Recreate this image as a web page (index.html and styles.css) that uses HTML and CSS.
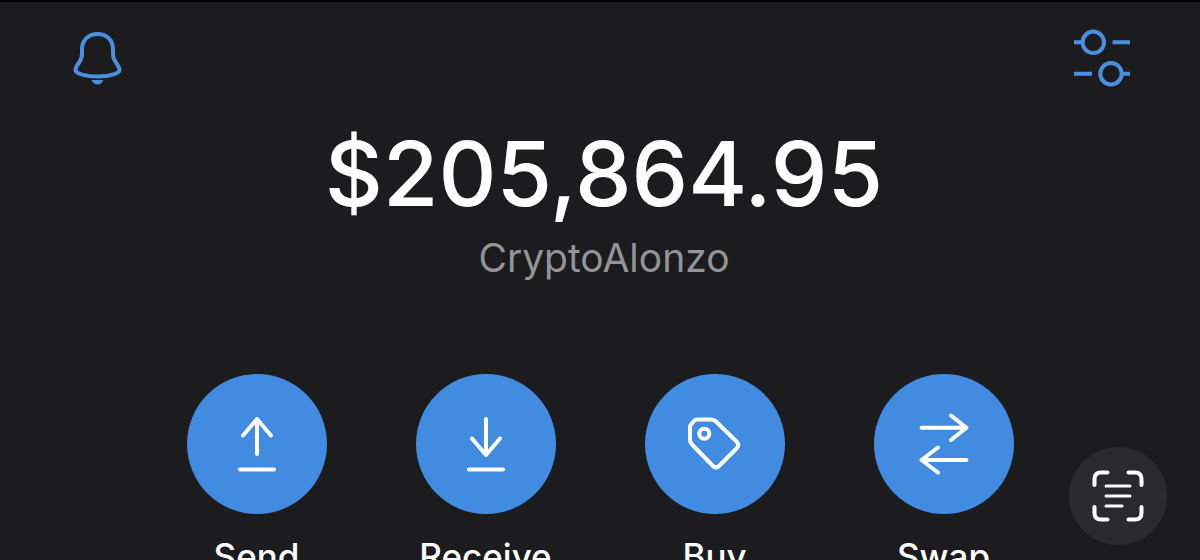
FILE: index.html
```
<!DOCTYPE html>
<html lang="en">
<head>
    <meta charset="UTF-8">
    <meta name="viewport" content="width=device-width, initial-scale=1.0">
    <title>Wallet</title>
    <link rel="stylesheet" href="styles.css">
</head>
<body>
    <header class="top-bar">
        <button type="button" class="icon-button" aria-label="Notifications">
            <svg viewBox="0 0 60 60">
                <path d="M29.5 6C20 6 14 12.500 14 21V26C14 34 7.500 37 7.500 42C7.500 45.500 18 48.500 29.500 48.500S51.500 45.500 51.500 42C51.500 37 45 34 45 26V21C45 12.500 39 6 29.500 6Z"/>
                <path class="filled" d="M23.500 52H35.500C34 55 32 56.500 29.500 56.500S25 55 23.500 52Z"/>
            </svg>
        </button>
        <button type="button" class="icon-button" aria-label="Settings">
            <svg viewBox="0 0 60 60">
                <circle cx="21.300" cy="14.300" r="10.700"/>
                <circle cx="39" cy="45.700" r="10.700"/>
                <path d="M2 14.300H10M40.500 14.300H58M2 45.700H20M50 45.700H58"/>
            </svg>
        </button>
    </header>

    <main>
        <div class="summary">
            <h1 class="balance">$205,864.95</h1>
            <p class="account">CryptoAlonzo</p>
        </div>

        <div class="actions">
            <button type="button" class="action">
                <svg class="circle" viewBox="0 0 140 140">
                    <path d="M70 45V80M56 61.500L70 45L84 61.500M53 95.500H87"/>
                </svg>
                <span>Send</span>
            </button>
            <button type="button" class="action">
                <svg class="circle" viewBox="0 0 140 140">
                    <path d="M70 45V81M56 64.500L70 81L84 64.500M53 95.500H87"/>
                </svg>
                <span>Receive</span>
            </button>
            <button type="button" class="action">
                <svg class="circle" viewBox="0 0 140 140">
                    <path d="M52 45.500H66Q69 45.500 71 47.500L91.500 67.500Q95 71 91.500 74.500L74 92Q71 95 68 92L47 70.500Q45 68.500 45 65.500V53Q45 51.500 46 50.500L49.500 46.500Q50.500 45.500 52 45.500Z"/>
                    <circle cx="59.300" cy="59.700" r="5"/>
                </svg>
                <span>Buy</span>
            </button>
            <button type="button" class="action">
                <svg class="circle" viewBox="0 0 140 140">
                    <path d="M47.500 53.700H92.500M77 41.500L92.500 53.700L77 66M92.500 86H47.500M64 73.500L47.500 86L64 98.500"/>
                </svg>
                <span>Swap</span>
            </button>
        </div>
    </main>

    <button type="button" class="scan" aria-label="Scan text">
        <svg viewBox="0 0 98 98">
            <path d="M25.500 38V32Q25.500 25.500 32 25.500H38.500M59.500 25.500H66Q72.500 25.500 72.500 32V38M72.500 60V66Q72.500 72.500 66 72.500H59.500M38.500 72.500H32Q25.500 72.500 25.500 66V60"/>
            <path class="thin" d="M37 39H61M37 49H61M37 59H53"/>
        </svg>
    </button>
</body>
</html>
```
FILE: styles.css
```
* {
    box-sizing: border-box;
}
body {
    margin: 0;
    height: 100vh;
    overflow: hidden;
    border-top: 2px solid #000;
    background-color: #1c1c1e;
    color: #fff;
    font-family: Inter, "Liberation Sans", sans-serif;
}
button {
    padding: 0;
    border: none;
    background: none;
    color: inherit;
    font: inherit;
    cursor: pointer;
}
svg {
    display: block;
    fill: none;
    stroke: currentColor;
    stroke-width: 4;
}
.top-bar {
    display: flex;
    justify-content: space-between;
    padding: 26px 68px 0;
}
.icon-button {
    width: 60px;
    height: 60px;
    color: #4a90e2;
}
.filled {
    fill: currentColor;
    stroke: none;
}
.summary {
    padding: 34px 0 0 8px;
    text-align: center;
}
.balance {
    margin: 0;
    font-size: 90px;
    line-height: 104px;
    font-weight: 500;
}
.account {
    margin: 8px 0 0;
    color: #949496;
    font-size: 39px;
    line-height: 48px;
}
.actions {
    display: flex;
    justify-content: center;
    gap: 89px;
    margin-top: 92px;
}
.action {
    display: flex;
    flex-direction: column;
    align-items: center;
    gap: 20px;
    width: 140px;
    font-size: 35px;
    line-height: 44px;
    font-weight: 500;
}
.circle {
    width: 140px;
    height: 140px;
    border-radius: 50%;
    background-color: #418ce0;
    stroke-linecap: round;
    stroke-linejoin: round;
}
/* floats over the page in the corner */
.scan {
    position: absolute;
    right: 33px;
    bottom: 15px;
    width: 98px;
    height: 98px;
    border-radius: 50%;
    background-color: #2a2a2c;
    stroke-linecap: round;
}
.thin {
    stroke-width: 3;
}
```
